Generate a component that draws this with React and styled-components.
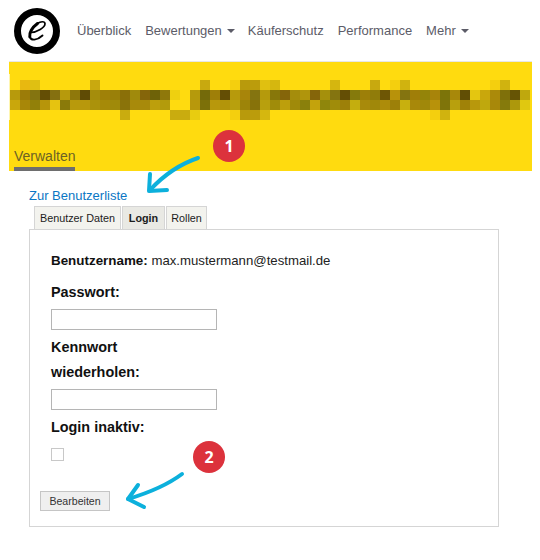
import React from 'react'
import styled, { createGlobalStyle } from 'styled-components'

const GlobalStyle = createGlobalStyle`
  html, body { margin: 0; padding: 0; background: #fff; }
  body { font-family: "Liberation Sans", Arial, sans-serif; color: #111; }
`

const Page = styled.div`
  position: relative;
  width: 540px;
  height: 560px;
  overflow: hidden;
`

const Nav = styled.nav`
  display: flex;
  align-items: center;
  height: 61px;
  padding-left: 14px;
`

const LogoBox = styled.svg`
  width: 46px;
  height: 46px;
  margin-right: 17px;
  flex: none;
`

const NavLink = styled.a`
  display: flex;
  align-items: center;
  margin-right: 14px;
  font-size: 13px;
  color: #5c5c68;
`

const Caret = styled.span`
  width: 0;
  height: 0;
  margin: 1px -1px 0 5px;
  border-top: 4px solid #5c5c68;
  border-left: 4px solid transparent;
  border-right: 4px solid transparent;
`

const Band = styled.header`
  box-sizing: border-box;
  display: flex;
  flex-direction: column;
  width: 523px;
  height: 110px;
  margin-left: 9px;
  padding-top: 12px;
  background: #ffdb0f;
  border-top: 1px solid #e7e7e7;
`

const Mosaic = styled.svg`
  display: block;
  width: 523px;
  height: 46px;
`

const BandTab = styled.div`
  align-self: flex-start;
  margin: 27px 0 0 5px;
  height: 24px;
  box-sizing: border-box;
  font-size: 14px;
  line-height: 19px;
  color: #6b6226;
  border-bottom: 4px solid #6e6e6e;
`

const Content = styled.main`
  width: 470px;
  margin-left: 29px;
`

const BackLink = styled.a`
  display: block;
  margin-top: 17px;
  font-size: 13px;
  line-height: 16px;
  color: #0a76c4;
`

const Tabs = styled.div`
  display: flex;
  gap: 1px;
  margin: 2px 0 0 5px;
`

const Tab = styled.div`
  box-sizing: border-box;
  display: flex;
  align-items: center;
  justify-content: center;
  width: ${p => p.$w}px;
  height: 23px;
  font-size: 10.8px;
  font-weight: ${p => (p.$active ? 'bold' : 'normal')};
  color: #1c1c1c;
  background: ${p => (p.$active ? '#e9e9e4' : '#f3f3ee')};
  border: 1px solid #d5d5d5;
  border-bottom: none;
`

const Panel = styled.section`
  box-sizing: border-box;
  width: 470px;
  padding: 21px 10px 15px;
  border: 1px solid #d5d5d5;
`

const Fields = styled.div`
  padding-left: 11px;
`

const UserRow = styled.div`
  font-size: 13.2px;
  line-height: 20px;
  color: #222;
  margin-bottom: 9px;
  b { font-size: 13.4px; color: #111; }
`

const Label = styled.div`
  font-size: 14.4px;
  font-weight: bold;
  line-height: 25px;
  color: #111;
  margin-top: ${p => p.$top || 0}px;
`

const TextInput = styled.input`
  display: block;
  box-sizing: border-box;
  width: 166px;
  height: 21px;
  margin: 4px 0 0;
  padding: 0;
  background: #fff;
  border: 1px solid #b5b5b5;
  border-radius: 0;
  outline: none;
`

const CheckBox = styled.div`
  box-sizing: border-box;
  width: 13px;
  height: 13px;
  margin-top: 8px;
  border: 1px solid #c8c8c8;
`

const EditButton = styled.button`
  display: block;
  box-sizing: border-box;
  width: 70px;
  height: 20px;
  margin-top: 30px;
  padding: 0;
  font-family: inherit;
  font-size: 10.6px;
  color: #333;
  background: #efefef;
  border: 1px solid #c5c5c5;
  border-radius: 0;
`

const Arrows = styled.svg`
  position: absolute;
  left: 0;
  top: 0;
  width: 540px;
  height: 560px;
  pointer-events: none;
`

const Badge = styled.div`
  position: absolute;
  left: ${p => p.$x - 16}px;
  top: ${p => p.$y - 16}px;
  display: flex;
  align-items: center;
  justify-content: center;
  width: 32px;
  height: 32px;
  border-radius: 50%;
  background: #dc323c;
  color: #fff;
  font-family: "Open Sans", sans-serif;
  font-size: 16px;
  font-weight: bold;
`

// blurred-out shop name, 10px cells starting at x=10
const row1 = {
  20: '#e8b810', 30: '#dfc012', 90: '#c9a90f', 200: '#c8a90f', 230: '#f4cf0e', 240: '#b89a0c',
  250: '#bb9c0c', 260: '#e0c010', 270: '#d5b70f', 330: '#d5b60f', 370: '#c8a90f', 390: '#f4cf0e',
  400: '#d0b30f', 490: '#f4cf0e', 500: '#d0b30f',
}
const row2 = [
  '#b79a0c', '#9c7c08', '#847410', '#644e05', '#857010', '#b79a0c', '#8f780b', '#5f4b05', '#a58d0c',
  '#a08108', '#9a8009', '#8a6f08', '#a08a0c', '#85650a', '#6e6208', '#8f780b', '#eed010', '#ffdb0f',
  '#b59a0c', '#746a0a', '#9f7f08', '#644e05', '#b79a0c', '#a8850a', '#847410', '#b59a0c', '#87770a',
  '#85650a', '#a58d0c', '#b0950c', '#85650a', '#a5900c', '#847410', '#644e05', '#857a0c', '#9d7f08',
  '#907c0a', '#6e5605', '#b8920a', '#847410', '#a07e08', '#948409', '#a8840a', '#7c7409', '#a8880a',
  '#614e05', '#e4c610', '#c9a70c', '#ab8a0a', '#7f700a', '#665405', '#bfa80d',
]
const row3 = [
  '#c9a70c', '#a88708', '#928009', '#b7950a', '#e6c310', '#8a7a0a', '#b89a0c', '#b8980c', '#ab920b',
  '#a68a08', '#a08a0a', '#8a730a', '#a88a0b', '#a88a0b', '#bd9f0c', '#b39b0c', '#ffdb0f', '#ffdb0f',
  '#b8980c', '#7c7009', '#b8980c', '#b3950a', '#b8a00d', '#9d8409', '#87720a', '#b8a00d', '#a08c0a',
  '#bd9f0c', '#a08a0a', '#8a800c', '#c4a30c', '#8f860c', '#a08c0a', '#9d8009', '#c4ae0e', '#a88a0b',
  '#a0880a', '#ad8c0a', '#9d8009', '#c8b00e', '#a8880a', '#a0880a', '#b8920a', '#7f740a', '#b8a00d',
  '#a08208', '#b8980c', '#bfa80d', '#a8880a', '#857a0c', '#ad980c', '#e0c810',
]
const row4 = {
  120: '#c9ac0f', 170: '#c9ac0f', 180: '#c9ac0f', 190: '#e8cc10', 230: '#f4cf0e', 240: '#b89a0c',
  250: '#bb9c0c', 260: '#d5b70f', 430: '#f4cf0e', 440: '#d0b30f',
}

const Cell = ({ x, y, fill }) => <rect x={x - 9} y={y - 74} width="10" height="10" fill={fill} shapeRendering="crispEdges" />

function ShopNameMosaic() {
  return (
    <Mosaic viewBox="0 0 523 46">
      <rect x="0" y="0" width="1" height="46" fill="#fff6b0" />
      {Object.entries(row1).map(([x, c]) => <Cell key={x} x={+x} y={80} fill={c} />)}
      {row2.map((c, i) => <Cell key={i} x={10 + i * 10} y={90} fill={c} />)}
      {row3.map((c, i) => <Cell key={i} x={10 + i * 10} y={100} fill={c} />)}
      {Object.entries(row4).map(([x, c]) => <Cell key={x} x={+x} y={110} fill={c} />)}
    </Mosaic>
  )
}

export default function App() {
  return (
    <Page>
      <GlobalStyle />
      <Nav>
        <LogoBox viewBox="0 0 46 46">
          <circle cx="23" cy="23" r="19.5" fill="#fff" stroke="#000" strokeWidth="7" />
          <g fill="none" stroke="#000" strokeLinecap="round">
            <path d="M16.5 24.5C23 24.5 31 19.5 31 15.8C31 13 26.5 13.2 23.5 15.5" strokeWidth="1.7" />
            <path d="M23.5 15.5C18 19.5 15 25 15.8 28.8" strokeWidth="3" />
            <path d="M15.8 28.8C16.8 33 23 32.6 28.5 27.5" strokeWidth="1.9" />
          </g>
        </LogoBox>
        <NavLink>Überblick</NavLink>
        <NavLink>Bewertungen<Caret /></NavLink>
        <NavLink>Käuferschutz</NavLink>
        <NavLink>Performance</NavLink>
        <NavLink>Mehr<Caret /></NavLink>
      </Nav>

      <Band>
        <ShopNameMosaic />
        <BandTab>Verwalten</BandTab>
      </Band>

      <Content>
        <BackLink>Zur Benutzerliste</BackLink>
        <Tabs>
          <Tab $w={87}>Benutzer Daten</Tab>
          <Tab $w={43} $active>Login</Tab>
          <Tab $w={41}>Rollen</Tab>
        </Tabs>
        <Panel>
          <Fields>
            <UserRow><b>Benutzername:</b> max.mustermann@testmail.de</UserRow>
            <Label>Passwort:</Label>
            <TextInput type="text" />
            <Label $top={5}>Kennwort<br />wiederholen:</Label>
            <TextInput type="text" />
            <Label $top={5}>Login inaktiv:</Label>
            <CheckBox />
          </Fields>
          <EditButton>Bearbeiten</EditButton>
        </Panel>
      </Content>

      <Arrows viewBox="0 0 540 560" fill="none" stroke="#0cb0dc" strokeWidth="4" strokeLinecap="round" strokeLinejoin="round">
        <path d="M198 158C180 164 163 176 150 190" />
        <path d="M150 174L149 191L167 190" />
        <path d="M182 474C166 486 148 493 128 499" />
        <path d="M138 485L128 499L144 507" />
      </Arrows>
      <Badge $x={229} $y={146}>1</Badge>
      <Badge $x={209} $y={457}>2</Badge>
    </Page>
  )
}
